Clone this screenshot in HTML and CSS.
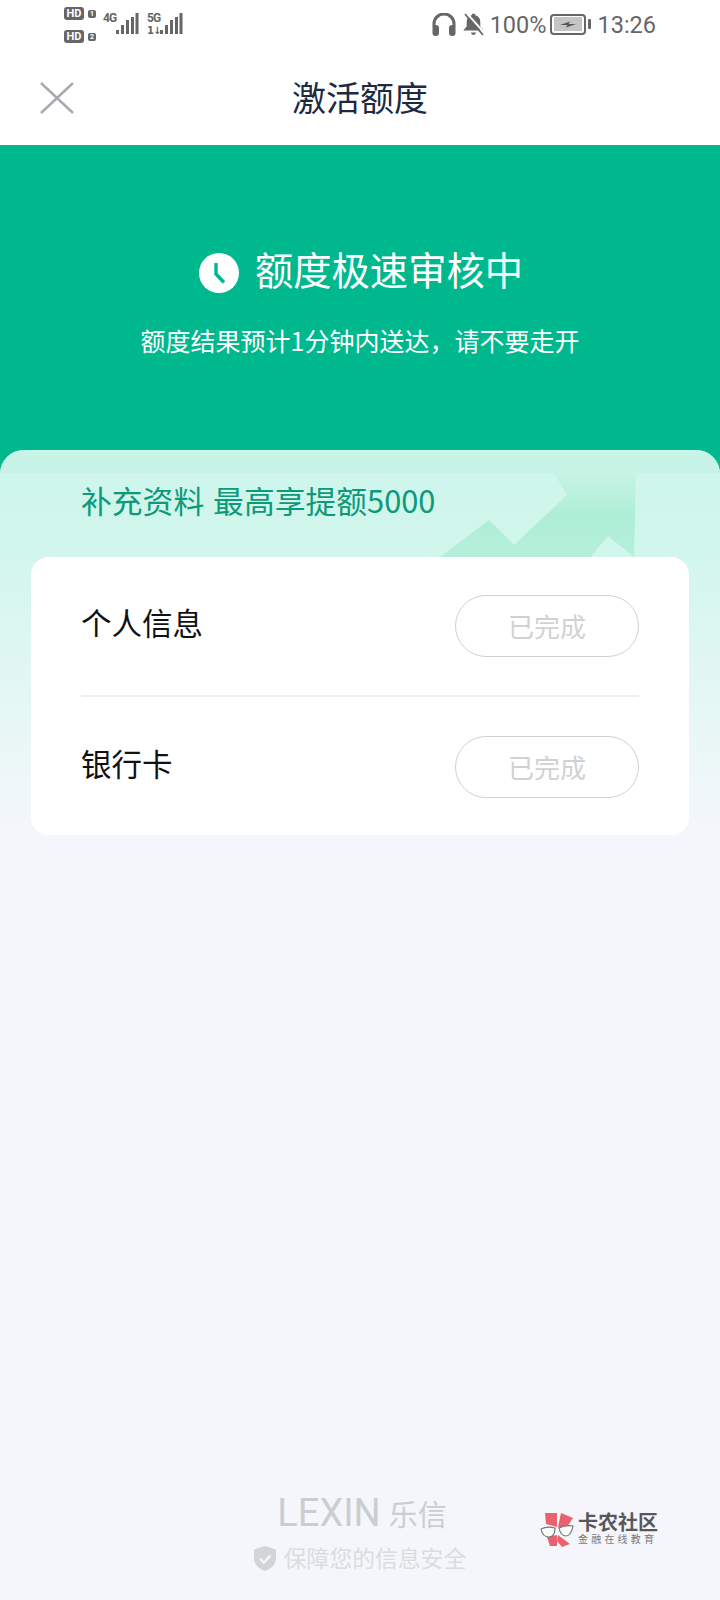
FILE: index.html
```html
<!DOCTYPE html>
<html lang="zh-CN">
<head>
<meta charset="utf-8">
<title>激活额度</title>
<link rel="stylesheet" href="styles.css">
</head>
<body>
<div class="page">
  <header class="status">
    <div class="status-left">
      <div class="sims">
        <div class="sim"><span class="hd">HD</span><span class="simno">1</span></div>
        <div class="sim"><span class="hd">HD</span><span class="simno">2</span></div>
      </div>
      <div class="net">
        <div class="net-labels"><span class="net-type">4G</span></div>
        <svg class="bars" width="24" height="22" viewBox="0 0 24 22"><path d="M1 17h3v4H1zM6 12h3v9H6zM11 7h3v14h-3zM16 4h3v17h-3zM20.500 0h3v21h-3z"/></svg>
      </div>
      <div class="net net-5g">
        <div class="net-labels"><span class="net-type">5G</span><span class="net-speed">1↓</span></div>
        <svg class="bars" width="24" height="22" viewBox="0 0 24 22"><path d="M1 17h3v4H1zM6 12h3v9H6zM11 7h3v14h-3zM16 4h3v17h-3zM20.500 0h3v21h-3z"/></svg>
      </div>
    </div>
    <div class="status-right">
      <svg class="ico-head" width="24" height="23" viewBox="0 0 24 23"><path d="M2 14V11a10 10 0 0 1 20 0v3" fill="none" stroke="#666" stroke-width="3"/><rect x="0.500" y="12" width="6.500" height="11" rx="3" fill="#666"/><rect x="17" y="12" width="6.500" height="11" rx="3" fill="#666"/></svg>
      <svg class="ico-bell" width="23" height="23" viewBox="0 0 23 23"><path d="M11.500 0.500c1 0 1.800.8 1.800 1.700 3.500.8 5 3.600 5 6.800v4.500l3.500 4H1.200l3.500-4V9c0-3.200 1.500-6 5-6.800 0-.9.800-1.700 1.800-1.700z" fill="#666"/><path d="M9 19.500h5a2.500 2.500 0 0 1-5 0z" fill="#666"/><path d="M4.500 0l18 20" stroke="#fff" stroke-width="2"/><path d="M3 1l18 21" stroke="#666" stroke-width="1.800"/></svg>
      <span class="pct">100%</span>
      <div class="battery">
        <div class="batt-body"><svg width="28" height="14" viewBox="0 0 28 14"><rect width="28" height="14" fill="#c4c4c4"/><path d="M6 8l10-3.500-1.500 2.500H22l-10 3.500 1.500-2.500z" fill="#555"/></svg></div>
        <span class="batt-nub"></span>
      </div>
      <span class="clock">13:26</span>
    </div>
  </header>

  <nav class="nav">
    <svg class="close" width="34" height="32" viewBox="0 0 34 32"><path d="M1 1l32 30M33 1L1 31" stroke="#a6a9ae" stroke-width="2.400" fill="none"/></svg>
    <h1 class="nav-title">激活额度</h1>
  </nav>

  <section class="hero">
    <div class="hero-head">
      <svg class="hero-clock" width="40" height="40" viewBox="0 0 40 40"><circle cx="20" cy="20" r="20" fill="#fff"/><path d="M17 10v11l8 8.500" fill="none" stroke="#00b88d" stroke-width="3.400"/></svg>
      <h2 class="hero-title">额度极速审核中</h2>
    </div>
    <p class="hero-sub">额度结果预计1分钟内送达，请不要走开</p>
  </section>

  <main class="panel">
    <svg class="arrow" width="210" height="90" viewBox="0 0 210 90"><defs><linearGradient id="ag" x1="0" y1="0" x2="0" y2="1"><stop offset="0" stop-color="#c8f3e5"/><stop offset="0.5" stop-color="#aeeed6"/><stop offset="1" stop-color="#b6efda"/></linearGradient></defs><path d="M6 90L59 50l25 25 53-50L123 2h83l-2 85-26-21-20 24z" fill="url(#ag)"/></svg>
    <h3 class="promo">补充资料 最高享提额5000</h3>
    <div class="card">
      <div class="row">
        <span class="row-label">个人信息</span>
        <span class="pill">已完成</span>
      </div>
      <div class="row row-second">
        <span class="row-label">银行卡</span>
        <span class="pill">已完成</span>
      </div>
    </div>
    <footer class="foot">
      <div class="brand"><span class="brand-en">LEXIN</span><span class="brand-cn">乐信</span></div>
      <div class="safe">
        <svg width="22" height="25" viewBox="0 0 22 25"><path d="M11 0l11 3.500V12c0 6.500-4.500 10.500-11 13C4.500 22.500 0 18.500 0 12V3.500z" fill="#d2d4d8"/><path d="M6 12.500l4 4 6.500-7" fill="none" stroke="#f4f6fb" stroke-width="2.400"/></svg>
        <span>保障您的信息安全</span>
      </div>
    </footer>
    <div class="mark">
      <svg width="38" height="36" viewBox="0 0 38 36"><path d="M5 1h12v14L6 12zM21 1l12 5-8 12-7-3zM7 25l10-2v11H10zM18 23l12 9-8 3-5-6z" fill="#e8636f"/><path d="M1 17c4-2 10-2 14-1 0 5-2 9-6 9s-7-3-8-8zM19 16c4-2 9-3 14-2-1 5-3 10-7 10s-6-3-7-8z" fill="#fbfbfb" stroke="#77777b" stroke-width="1.200"/></svg>
      <div class="mark-text"><span class="mark-cn">卡农社区</span><span class="mark-sub">金融在线教育</span></div>
    </div>
  </main>
</div>
</body>
</html>
```

FILE: styles.css
```css
* { box-sizing: border-box; }
html, body { margin: 0; padding: 0; }
body { font-family: "Noto Sans CJK SC", "Roboto", sans-serif; background: #f4f6fb; }
h1, h2, h3, p { margin: 0; font-weight: 400; }
.page { width: 720px; height: 1600px; display: flex; flex-direction: column; overflow: hidden; }

.status { height: 48px; background: #fff; display: flex; justify-content: space-between; padding: 7px 64px 0; color: #666; }
.status-left { display: flex; }
.sims { display: flex; flex-direction: column; gap: 10px; width: 39px; }
.sim { display: flex; align-items: center; gap: 4px; height: 13px; }
.hd { width: 20px; height: 13px; border-radius: 3px; background: #666; color: #fff; font: 700 11px/13px "Roboto", sans-serif; text-align: center; }
.simno { width: 8px; height: 8px; border-radius: 2px; background: #666; color: #fff; font: 700 7px/8px "Roboto", sans-serif; text-align: center; }
.net { display: flex; width: 44px; }
.net-labels { display: flex; flex-direction: column; width: 12px; padding-top: 5px; }
.net-type { font: 700 12px/12px "Roboto", sans-serif; letter-spacing: -1px; }
.net-speed { font: 700 10px/10px "DejaVu Sans", sans-serif; margin-top: 2px; letter-spacing: -1px; white-space: nowrap; }
.bars { fill: #666; margin-top: 6px; }
.status-right { display: flex; align-items: flex-start; }
.ico-head { margin: 6px 6px 0 0; }
.ico-bell { margin: 6px 5px 0 0; }
.pct, .clock { font: 400 23.500px/36px "Roboto", sans-serif; color: #666; }
.pct { margin-right: 4px; }
.battery { display: flex; align-items: center; height: 20px; margin: 7px 6px 0 0; }
.batt-body { width: 36px; height: 21px; border: 2px solid #666; border-radius: 4px; padding: 1.500px 2px; display: flex; }
.batt-nub { width: 3px; height: 10px; background: #666; margin-left: 2px; border-radius: 1px; }

.nav { height: 97px; background: #fff; display: flex; align-items: center; justify-content: center; position: relative; }
.close { position: absolute; left: 40px; top: 34px; }
.nav-title { font-size: 34px; line-height: 44px; color: #1d2a3f; }

.hero { height: 329px; background: #00b88d; display: flex; flex-direction: column; align-items: center; padding-top: 96px; color: #fff; }
.hero-head { display: flex; align-items: center; gap: 16px; height: 56px; padding-left: 2px; }
.hero-clock { margin-top: 8px; }
.hero-title { font-size: 38.300px; line-height: 56px; }
.hero-sub { font-size: 25px; line-height: 36px; margin-top: 25px; }

.panel { flex: 1; margin-top: -24px; position: relative; border-radius: 24px 24px 0 0; padding: 30px 31px 0; display: flex; flex-direction: column; overflow: hidden;
  background: linear-gradient(180deg, #cff6ec 0, #d1f6ec 100px, #e6f7f5 260px, #f4f6fb 385px, #f4f6fb 100%); }
.panel::before { content: ""; position: absolute; left: 0; right: 0; top: 0; height: 23px; background: linear-gradient(180deg, #c9f4e8, #c6f3e6); }
.arrow { position: absolute; left: 430px; top: 20px; }
.promo { position: relative; font-size: 30.800px; line-height: 40px; word-spacing: 2px; color: #0c9a7b; padding-left: 50px; }
.card { position: relative; margin-top: 37px; background: #fff; border-radius: 18px; padding: 0 50px; }
.row { height: 140px; display: flex; align-items: flex-start; justify-content: space-between; padding-top: 38px; border-bottom: 2px solid #eceded; }
.row-second { border-bottom: 0; height: 138px; padding-top: 39px; }
.row-label { font-size: 30.500px; line-height: 54px; color: #111; }
.pill { width: 184px; height: 62px; border: 1px solid #d0d1d3; border-radius: 31px; font-size: 26px; line-height: 60px; color: #d0d1d3; text-align: center; }
.foot { margin-top: auto; padding-bottom: 25px; display: flex; flex-direction: column; align-items: center; color: #cbcdd0; }
.brand { display: flex; align-items: center; gap: 8px; height: 40px; margin-right: -4px; }
.brand-en { font: 400 38px/40px "Roboto", sans-serif; }
.brand-cn { font-size: 29px; line-height: 40px; }
.safe { display: flex; align-items: center; gap: 8px; font-size: 22.800px; line-height: 34px; color: #dadcdf; margin-top: 8px; }
.mark { position: absolute; left: 540px; top: 1062px; display: flex; align-items: flex-start; }
.mark-text { display: flex; flex-direction: column; font-family: "Liberation Sans", "Noto Sans CJK SC", sans-serif; }
.mark-cn { font-size: 20px; font-weight: 700; line-height: 22px; color: #58585c; }
.mark-sub { font-size: 10px; letter-spacing: 3.200px; line-height: 12px; color: #77777b; white-space: nowrap; }
```
